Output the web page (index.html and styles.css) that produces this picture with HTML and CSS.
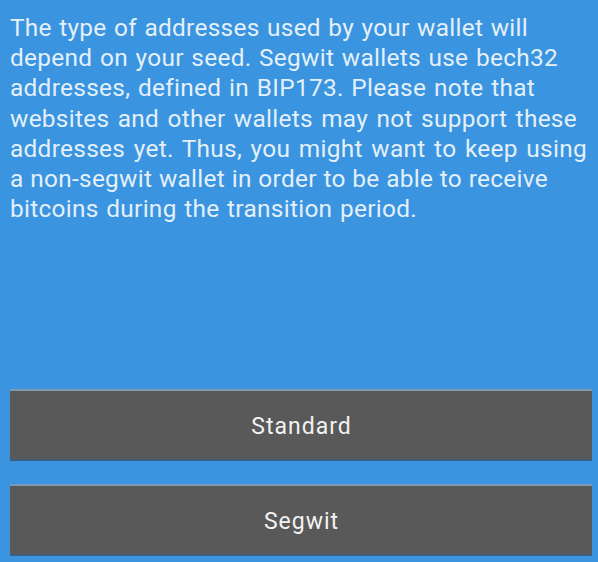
FILE: index.html
```html
<!DOCTYPE html>
<html>
<head>
<meta charset="utf-8">
<link rel="stylesheet" href="styles.css">
</head>
<body>
<div class="screen">
  <p class="message">
    <span class="line l1">The type of addresses used by your wallet will</span>
    <span class="line l2">depend on your seed. Segwit wallets use bech32</span>
    <span class="line l3">addresses, defined in BIP173. Please note that</span>
    <span class="line l4">websites and other wallets may not support these</span>
    <span class="line l5">addresses yet. Thus, you might want to keep using</span>
    <span class="line l6">a non-segwit wallet in order to be able to receive</span>
    <span class="line l7">bitcoins during the transition period.</span>
  </p>
  <div class="buttons">
    <button class="btn">Standard</button>
    <button class="btn">Segwit</button>
  </div>
</div>
</body>
</html>
```
FILE: styles.css
```css
html, body {
  margin: 0;
  padding: 0;
  background: #3a94e0;
}
.screen {
  width: 598px;
  height: 562px;
  display: flex;
  flex-direction: column;
  justify-content: space-between;
  box-sizing: border-box;
  padding: 13px 6px 6px 10px;
  font-family: Roboto, "Noto Sans", sans-serif;
}
.message {
  margin: 0;
  color: #e3f0fa;
  font-size: 24.4px;
  letter-spacing: 0.3px;
  line-height: 30.2px;
}
.line {
  display: block;
  white-space: nowrap;
  text-align: justify;
  text-align-last: justify;
}
.l1 { width: 518px; }
.l2 { width: 548px; }
.l3 { width: 525px; }
.l4 { width: 567px; }
.l5 { width: 577px; }
.l6 { width: 538px; }
.l7 { width: 407px; }
.buttons {
  display: flex;
  flex-direction: column;
  gap: 23px;
}
.btn {
  display: block;
  width: 582px;
  height: 72px;
  margin: 0;
  padding: 2px 0 0 1px;
  border: none;
  border-top: 2px solid #7d98b0;
  border-bottom: 2px solid #3f5f80;
  background: #595959;
  color: #f2f2f2;
  font-family: Roboto, "Noto Sans", sans-serif;
  font-size: 23px;
  letter-spacing: 1px;
  line-height: 1;
  text-align: center;
}
```
